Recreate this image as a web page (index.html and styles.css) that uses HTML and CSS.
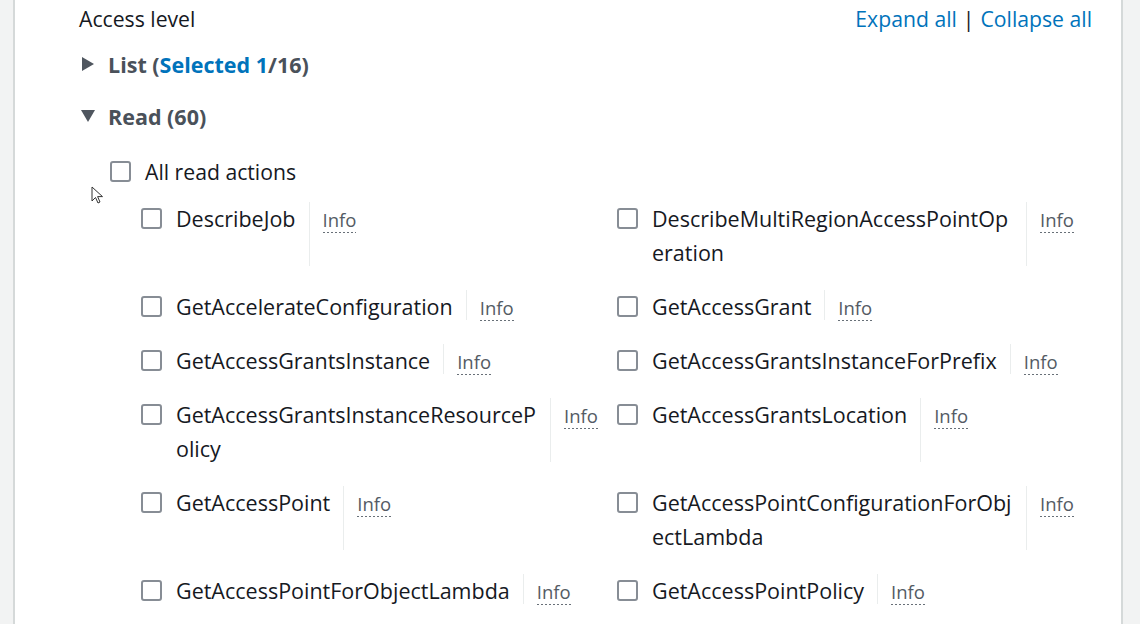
FILE: index.html
```html
<!DOCTYPE html>
<html lang="en">
<head>
<meta charset="utf-8">
<title>Access level</title>
<link rel="stylesheet" href="styles.css">
</head>
<body>
<div class="panel">
  <div class="header">
    <span class="title">Access level</span>
    <span class="links"><a class="link">Expand all</a><span class="pipe">|</span><a class="link">Collapse all</a></span>
  </div>

  <div class="group group-list">
    <svg class="caret" width="14" height="16" viewBox="0 0 14 16"><path d="M1 1 L13 8 L1 15 Z" fill="#4f565f"/></svg>
    <span class="group-label">List (<span class="sel">Selected 1</span>/16)</span>
  </div>

  <div class="group group-read">
    <svg class="caret" width="16" height="14" viewBox="0 0 16 14"><path d="M1 1 L15 1 L8 13 Z" fill="#4f565f"/></svg>
    <span class="group-label">Read (60)</span>
  </div>

  <div class="all-row">
    <span class="box"></span>
    <span class="all-label">All read actions</span>
  </div>

  <div class="grid">
    <div class="item"><span class="box"></span><span class="label">DescribeJob</span><span class="info"><a>Info</a></span></div>
    <div class="item"><span class="box"></span><span class="label">DescribeMultiRegionAccessPointOperation</span><span class="info"><a>Info</a></span></div>
    <div class="item"><span class="box"></span><span class="label">GetAccelerateConfiguration</span><span class="info"><a>Info</a></span></div>
    <div class="item"><span class="box"></span><span class="label">GetAccessGrant</span><span class="info"><a>Info</a></span></div>
    <div class="item"><span class="box"></span><span class="label">GetAccessGrantsInstance</span><span class="info"><a>Info</a></span></div>
    <div class="item"><span class="box"></span><span class="label">GetAccessGrantsInstanceForPrefix</span><span class="info"><a>Info</a></span></div>
    <div class="item"><span class="box"></span><span class="label">GetAccessGrantsInstanceResourcePolicy</span><span class="info"><a>Info</a></span></div>
    <div class="item"><span class="box"></span><span class="label">GetAccessGrantsLocation</span><span class="info"><a>Info</a></span></div>
    <div class="item"><span class="box"></span><span class="label">GetAccessPoint</span><span class="info"><a>Info</a></span></div>
    <div class="item"><span class="box"></span><span class="label">GetAccessPointConfigurationForObjectLambda</span><span class="info"><a>Info</a></span></div>
    <div class="item"><span class="box"></span><span class="label">GetAccessPointForObjectLambda</span><span class="info"><a>Info</a></span></div>
    <div class="item"><span class="box"></span><span class="label">GetAccessPointPolicy</span><span class="info"><a>Info</a></span></div>
  </div>

  <svg class="cursor" width="14" height="20" viewBox="0 0 14 20"><path d="M1 1 L1 15 L4.5 11.5 L7 17 L9 16 L6.6 10.6 L11.5 10.6 Z" fill="#fff" stroke="#333" stroke-width="1"/></svg>
</div>
</body>
</html>
```

FILE: styles.css
```css
html, body {
  margin: 0;
  padding: 0;
}
body {
  background: #f2f3f3;
  font-family: "Open Sans", "Liberation Sans", sans-serif;
  color: #16191f;
  height: 624px;
  overflow: hidden;
}
.panel {
  position: relative;
  margin-left: 13px;
  width: 1110px;
  height: 624px;
  background: #fff;
  border-left: 2px solid #d5d9d9;
  border-right: 2px solid #d5d9d9;
  box-sizing: border-box;
  padding-left: 64px;
  padding-right: 29px;
}
.header {
  display: flex;
  justify-content: space-between;
  align-items: center;
  height: 36px;
  font-size: 21.2px;
}
.title {
  color: #16191f;
}
.links {
  display: flex;
  align-items: center;
}
.link {
  color: #0073bb;
}
.pipe {
  color: #16191f;
  margin: 0 6px;
}
.group {
  display: flex;
  align-items: center;
  height: 28px;
  font-size: 21.5px;
  font-weight: 700;
  color: #4a515a;
}
.group-list {
  margin-top: 14px;
}
.group-read {
  margin-top: 24px;
}
.caret {
  width: 16px;
  margin-left: 1px;
  margin-right: 12px;
}
.sel {
  color: #0073bb;
}
.box {
  flex: none;
  width: 21px;
  height: 21px;
  box-sizing: border-box;
  border: 2px solid #878d95;
  border-radius: 3px;
  background: #fff;
}
.all-row {
  display: flex;
  align-items: center;
  margin-top: 27px;
  height: 28px;
  padding-left: 31px;
  font-size: 21.2px;
}
.all-label {
  margin-left: 14px;
}
.grid {
  display: grid;
  grid-template-columns: 476px 476px;
  row-gap: 20px;
  margin-top: 17px;
  padding-left: 62px;
}
.item {
  display: flex;
  align-items: flex-start;
  font-size: 21.5px;
  line-height: 34px;
}
.item .box {
  margin-top: 6px;
}
.label {
  margin-left: 14px;
  max-width: 361px;
  word-break: break-all;
}
.info {
  align-self: stretch;
  margin: 0 0 4px 13px;
  padding: 6px 0 0 13px;
  border-left: 1px solid #eaeded;
  font-size: 18.5px;
  line-height: 24px;
}
.info a {
  color: #545b64;
  padding-bottom: 1px;
  background-image: linear-gradient(to right, #687078 45%, transparent 45%);
  background-size: 4px 1px;
  background-repeat: repeat-x;
  background-position: left bottom;
}
.cursor {
  position: absolute;
  left: 76px;
  top: 186px;
}
```
